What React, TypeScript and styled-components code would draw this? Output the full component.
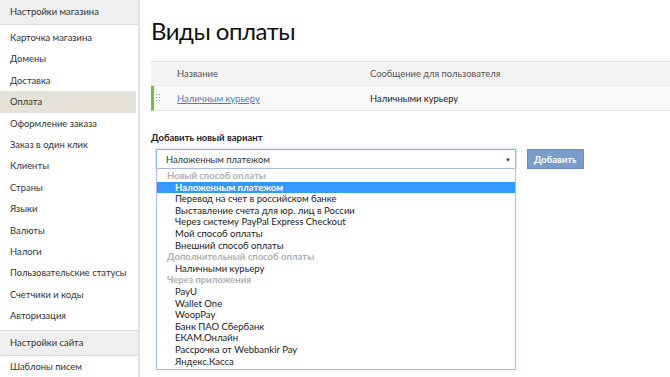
import React from 'react'
import styled, { createGlobalStyle } from 'styled-components'

const GlobalStyle = createGlobalStyle`
    body {
        margin: 0;
        font-family: Lato, Roboto, "Liberation Sans", sans-serif;
        background: #fff;
        color: #222;
    }
`

const menu = [
    'Карточка магазина',
    'Домены',
    'Доставка',
    'Оплата',
    'Оформление заказа',
    'Заказ в один клик',
    'Клиенты',
    'Страны',
    'Языки',
    'Валюты',
    'Налоги',
    'Пользовательские статусы',
    'Счетчики и коды',
    'Авторизация',
]

type Option = { label: string; group?: boolean; selected?: boolean }

const options: Option[] = [
    { label: 'Новый способ оплаты', group: true },
    { label: 'Наложенным платежом', selected: true },
    { label: 'Перевод на счет в российском банке' },
    { label: 'Выставление счета для юр. лиц в России' },
    { label: 'Через систему PayPal Express Checkout' },
    { label: 'Мой способ оплаты' },
    { label: 'Внешний способ оплаты' },
    { label: 'Дополнительный способ оплаты', group: true },
    { label: 'Наличными курьеру' },
    { label: 'Через приложения', group: true },
    { label: 'PayU' },
    { label: 'Wallet One' },
    { label: 'WoopPay' },
    { label: 'Банк ПАО Сбербанк' },
    { label: 'ЕКАМ.Онлайн' },
    { label: 'Рассрочка от Webbankir Pay' },
    { label: 'Яндекс.Касса' },
]

const Handle = () => (
    <svg width="5" height="9" viewBox="0 0 5 9">
        {[0, 3, 6].map((y) => (
            <g key={y} fill="#999">
                <rect x="0" y={y} width="1" height="1" />
                <rect x="3" y={y} width="1" height="1" />
            </g>
        ))}
    </svg>
)

const App = () => {
    return (
        <>
            <GlobalStyle />
            <Layout>
                <Sidebar>
                    <SectionHead>Настройки магазина</SectionHead>
                    <MenuList>
                        {menu.map((m) => (
                            <MenuItem key={m} $active={m === 'Оплата'}>{m}</MenuItem>
                        ))}
                    </MenuList>
                    <SectionHead $spaced>Настройки сайта</SectionHead>
                    <MenuItem>Шаблоны писем</MenuItem>
                </Sidebar>
                <Main>
                    <Title>Виды оплаты</Title>
                    <Table>
                        <HeadRow>
                            <Cell $w={193}>Название</Cell>
                            <Cell>Сообщение для пользователя</Cell>
                        </HeadRow>
                        <BodyRow>
                            <HandleCell><Handle /></HandleCell>
                            <Cell $w={193}><StyledLink href="/#">Наличным курьеру</StyledLink></Cell>
                            <Cell>Наличными курьеру</Cell>
                        </BodyRow>
                    </Table>
                    <Label>Добавить новый вариант</Label>
                    <AddRow>
                        <SelectWrap>
                            <SelectBox>
                                <span>Наложенным платежом</span>
                                <Arrow>▼</Arrow>
                            </SelectBox>
                            <ListBox>
                                {options.map((o) => (
                                    <OptionRow key={o.label} $group={o.group} $selected={o.selected}>
                                        {o.label}
                                    </OptionRow>
                                ))}
                            </ListBox>
                        </SelectWrap>
                        <AddButton>Добавить</AddButton>
                    </AddRow>
                </Main>
            </Layout>
        </>
    )
}

export default App

const Layout = styled.div`
    display: flex;
    width: 670px;
    height: 377px;
    overflow: hidden;
`

const Sidebar = styled.aside`
    width: 138px;
    flex-shrink: 0;
    border-right: 2px solid #e4e4e4;
    font-size: 9.4px;
    color: #333;
`

const SectionHead = styled.div<{ $spaced?: boolean }>`
    height: 24px;
    line-height: 24px;
    padding-left: 10px;
    background: #efefef;
    border-bottom: 1px solid #dcdcdc;
    border-top: ${(p) => (p.$spaced ? '1px solid #dcdcdc' : 'none')};
    margin-top: ${(p) => (p.$spaced ? '4px' : '0')};
`

const MenuList = styled.div`
    padding-top: 2px;
`

const MenuItem = styled.div<{ $active?: boolean }>`
    height: 21.4px;
    line-height: 21.4px;
    padding-left: 10px;
    margin-right: 2px;
    white-space: nowrap;
    background: ${(p) => (p.$active ? '#e3e1da' : 'transparent')};
`

const Main = styled.main`
    flex: 1;
    padding: 15px 0 0 11px;
    min-width: 0;
`

const Title = styled.h1`
    margin: 0 0 14px;
    font-size: 24px;
    letter-spacing: -0.5px;
    line-height: 32px;
    font-weight: 400;
    color: #111;
`

const Table = styled.div`
    border-top: 1px solid #e2e2e2;
    font-size: 9.4px;
`

const HeadRow = styled.div`
    display: flex;
    align-items: center;
    height: 23px;
    padding-left: 26px;
    background: #f3f3f3;
    border-bottom: 1px solid #e4e4e4;
    color: #555;
`

const BodyRow = styled.div`
    display: flex;
    align-items: center;
    height: 24px;
    border-left: 3px solid #6cbf4a;
    border-bottom: 1px solid #e2e2e2;
    background: #fafafa;
    color: #222;
`

const HandleCell = styled.div`
    width: 23px;
    padding-left: 2px;
    box-sizing: border-box;
    display: flex;
    align-items: center;
`

const Cell = styled.div<{ $w?: number }>`
    width: ${(p) => (p.$w ? `${p.$w}px` : 'auto')};
    flex-shrink: 0;
    white-space: nowrap;
`

const StyledLink = styled.a`
    color: #4a7fc3;
    text-decoration: underline;
`

const Label = styled.div`
    margin-top: 20px;
    font-size: 9.5px;
    font-weight: 700;
    color: #222;
    line-height: 14px;
`

const AddRow = styled.div`
    display: flex;
    align-items: flex-start;
    gap: 11px;
    margin-top: 4px;
    padding-left: 5px;
`

const SelectWrap = styled.div`
    position: relative;
    width: 360px;
`

const SelectBox = styled.div`
    box-sizing: border-box;
    height: 20px;
    border: 1px solid #8fb3e0;
    box-shadow: 0 0 2px #a9c6ec;
    display: flex;
    align-items: center;
    justify-content: space-between;
    padding: 0 4px 0 9px;
    font-size: 9.3px;
    color: #333;
`

const Arrow = styled.span`
    font-size: 6px;
    color: #444;
`

const ListBox = styled.div`
    position: absolute;
    top: 19px;
    left: 0;
    right: 0;
    box-sizing: border-box;
    border: 1px solid #a9bde0;
    background: #fff;
    padding: 1px 0 2px;
    font-size: 9.5px;
`

const OptionRow = styled.div<{ $group?: boolean; $selected?: boolean }>`
    height: 11.6px;
    line-height: 11.6px;
    white-space: nowrap;
    padding-left: ${(p) => (p.$group ? '10px' : '18px')};
    font-weight: ${(p) => (p.$group || p.$selected ? 700 : 400)};
    color: ${(p) => (p.$group ? '#b0b0b0' : p.$selected ? '#fff' : '#222')};
    background: ${(p) => (p.$selected ? '#3399ff' : 'transparent')};
`

const AddButton = styled.button`
    height: 20px;
    padding: 0 6px;
    border: 1px solid #6d8fc0;
    background: #7b9bcb;
    color: #fff;
    font-family: inherit;
    font-size: 9.4px;
    font-weight: 700;
    cursor: pointer;
`
